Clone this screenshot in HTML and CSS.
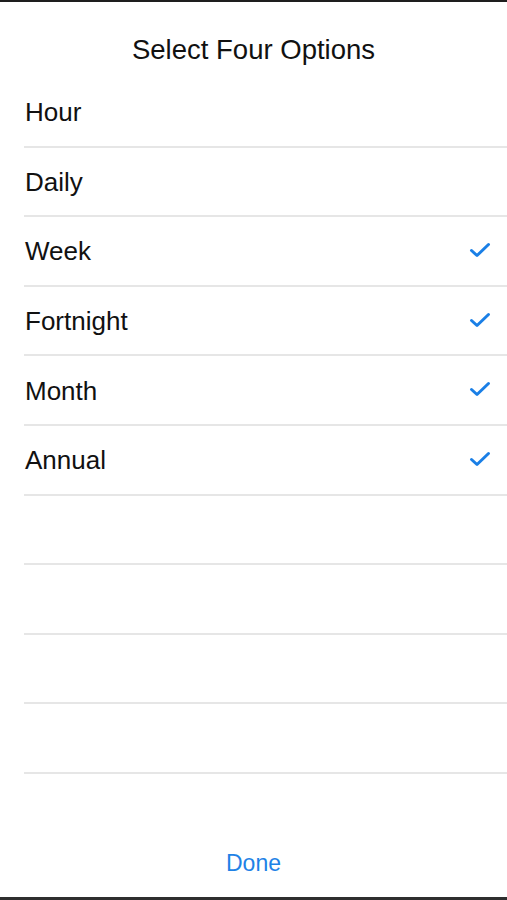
FILE: index.html
```html
<!DOCTYPE html>
<html lang="en">

<head>
    <meta charset="UTF-8">
    <meta name="viewport" content="width=device-width, initial-scale=1.0">
    <title>Select Four Options</title>
    <link rel="stylesheet" href="styles.css">
</head>

<body>
    <div class="sheet">
        <header class="sheet-title">Select Four Options</header>
        <ul class="options">
            <li class="option">Hour</li>
            <li class="option">Daily</li>
            <li class="option checked">Week
                <svg class="tick" viewBox="0 0 22 16"><path d="M2.5 8.5 L8 13.5 L19.5 2.5" /></svg>
            </li>
            <li class="option checked">Fortnight
                <svg class="tick" viewBox="0 0 22 16"><path d="M2.5 8.5 L8 13.5 L19.5 2.5" /></svg>
            </li>
            <li class="option checked">Month
                <svg class="tick" viewBox="0 0 22 16"><path d="M2.5 8.5 L8 13.5 L19.5 2.5" /></svg>
            </li>
            <li class="option checked">Annual
                <svg class="tick" viewBox="0 0 22 16"><path d="M2.5 8.5 L8 13.5 L19.5 2.5" /></svg>
            </li>
            <li class="option"></li>
            <li class="option"></li>
            <li class="option"></li>
            <li class="option"></li>
        </ul>
        <footer class="sheet-footer">
            <button class="done">Done</button>
        </footer>
    </div>
</body>

</html>
```

FILE: styles.css
```css
* {
    box-sizing: border-box;
}

body {
    margin: 0;
    background: #ffffff;
    font-family: "Liberation Sans", Arial, sans-serif;
    color: #111111;
}

.sheet {
    display: flex;
    flex-direction: column;
    height: 900px;
    border-top: 2px solid #1e1e1e;
    border-bottom: 3px solid #2e2e2e;
}

.sheet-title {
    height: 76px;
    padding-top: 32px;
    text-align: center;
    font-size: 27.5px;
    line-height: 32px;
}

.options {
    list-style: none;
    margin: 0;
    padding: 0;
}

.option {
    display: flex;
    align-items: center;
    justify-content: space-between;
    height: 69.6px;
    margin-left: 24px;
    padding: 2px 16px 0 1px;
    border-bottom: 2px solid #e6e6e6;
    font-size: 26px;
}

.tick {
    width: 22px;
    height: 16px;
    margin-top: -4px;
    fill: none;
    stroke: #1a7fe6;
    stroke-width: 3;
    stroke-linecap: round;
    stroke-linejoin: round;
}

.sheet-footer {
    flex: 1;
    padding-top: 75px;
    text-align: center;
}

.done {
    border: none;
    background: none;
    padding: 0;
    font-family: inherit;
    font-size: 23px;
    line-height: 28px;
    color: #1e82e6;
    cursor: pointer;
}
```
